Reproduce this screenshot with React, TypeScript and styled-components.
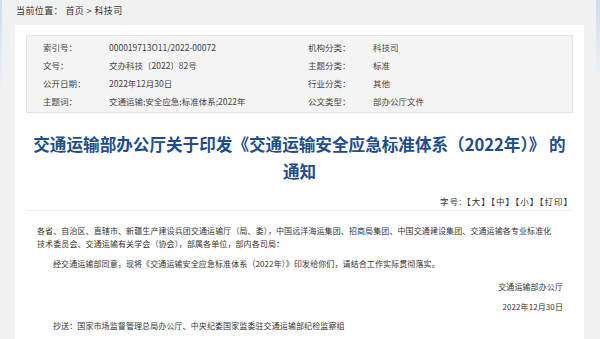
import styled, { createGlobalStyle } from "styled-components";

const GlobalStyle = createGlobalStyle`
  html, body {
    margin: 0;
    padding: 0;
  }
  body {
    width: 600px;
    height: 339px;
    overflow: hidden;
    font-family: "Noto Sans CJK SC", "Noto Sans", sans-serif;
    background-color: #f1f1f1;
    background-image:
      linear-gradient(to bottom, #cbdcee 0, #e4ebf2 60px, #f1f1f1 100px),
      linear-gradient(to bottom, #cbdcee 0, #e4ebf2 50px, #f1f1f1 80px);
    background-repeat: no-repeat;
    background-size: 2px 100px, 4px 80px;
    background-position: left top, right top;
  }
`;

const metaRows = [
  ["索引号：", "000019713O11/2022-00072", "机构分类：", "科技司"],
  ["文号：", "交办科技〔2022〕82号", "主题分类：", "标准"],
  ["公开日期：", "2022年12月30日", "行业分类：", "其他"],
  ["主题词：", "交通运输;安全应急;标准体系;2022年", "公文类型：", "部办公厅文件"],
];

const App: React.FC = () => {
  return (
    <>
      <GlobalStyle />
      <Page>
        <Breadcrumb>当前位置：&nbsp;首页 &gt; 科技司</Breadcrumb>
        <Panel>
          <MetaBox>
            {metaRows.map((row) => (
              <MetaRow key={row[0]}>
                <MetaLabel>{row[0]}</MetaLabel>
                <MetaValue>{row[1]}</MetaValue>
                <MetaLabel>{row[2]}</MetaLabel>
                <MetaValue>{row[3]}</MetaValue>
              </MetaRow>
            ))}
          </MetaBox>
          <Title>
            交通运输部办公厅关于印发《交通运输安全应急标准体系（2022年）》 的
            <br />
            通知
          </Title>
          <FontBar>
            字号:【大】【中】【小】【打印】
          </FontBar>
          <Body>
            <Para>
              各省、自治区、直辖市、新疆生产建设兵团交通运输厅（局、委），中国远洋海运集团、招商局集团、中国交通建设集团、交通运输各专业标准化技术委员会、交通运输有关学会（协会），部属各单位，部内各司局：
            </Para>
            <Para $indent>
              经交通运输部同意，现将《交通运输安全应急标准体系（2022年）》印发给你们，请结合工作实际贯彻落实。
            </Para>
            <Sign>交通运输部办公厅</Sign>
            <Sign>2022年12月30日</Sign>
            <Para $indent $top={2}>
              抄送：国家市场监督管理总局办公厅、中央纪委国家监委驻交通运输部纪检监察组
            </Para>
          </Body>
        </Panel>
      </Page>
    </>
  );
};

export default App;

const Page = styled.div`
  padding: 0 16px 0 15px;
`;

const Breadcrumb = styled.div`
  height: 25px;
  line-height: 21px;
  padding-left: 1px;
  font-size: 9px;
  letter-spacing: 0.4px;
  color: #333;
`;

const Panel = styled.div`
  background: #fff;
  padding: 10px 11px 20px;
`;

const MetaBox = styled.div`
  height: 72px;
  padding: 2px 0;
  background: #f4f4f4;
  border: 1px solid #e4e4e4;
`;

const MetaRow = styled.div`
  display: grid;
  grid-template-columns: 66px 199px 65px 1fr;
  padding-left: 16px;
  height: 18px;
  line-height: 18px;
  font-size: 8.5px;
  color: #444;
`;

const MetaLabel = styled.span`
  white-space: nowrap;
`;

const MetaValue = styled.span`
  white-space: nowrap;
`;

const Title = styled.h1`
  margin: 18px 0 0;
  text-align: center;
  font-size: 16.6px;
  line-height: 27px;
  font-weight: 700;
  color: #214d8c;
  white-space: nowrap;
`;

const FontBar = styled.div`
  margin-top: 8px;
  text-align: right;
  font-size: 8.5px;
  letter-spacing: 1px;
  line-height: 17px;
  color: #333;
  border-bottom: 1px solid #eeeeee;
`;

const Body = styled.div`
  padding: 13px 10px 0 11px;
  font-size: 8px;
  letter-spacing: 0.1px;
  color: #333;
`;

const Para = styled.p<{ $indent?: boolean; $top?: number }>`
  margin: ${(p) => p.$top ?? 0}px 0 7px;
  padding-right: 6px;
  line-height: 13px;
  text-indent: ${(p) => (p.$indent ? "16px" : "0")};
`;

const Sign = styled.p`
  margin: 0;
  text-align: right;
  line-height: 20px;
`;
